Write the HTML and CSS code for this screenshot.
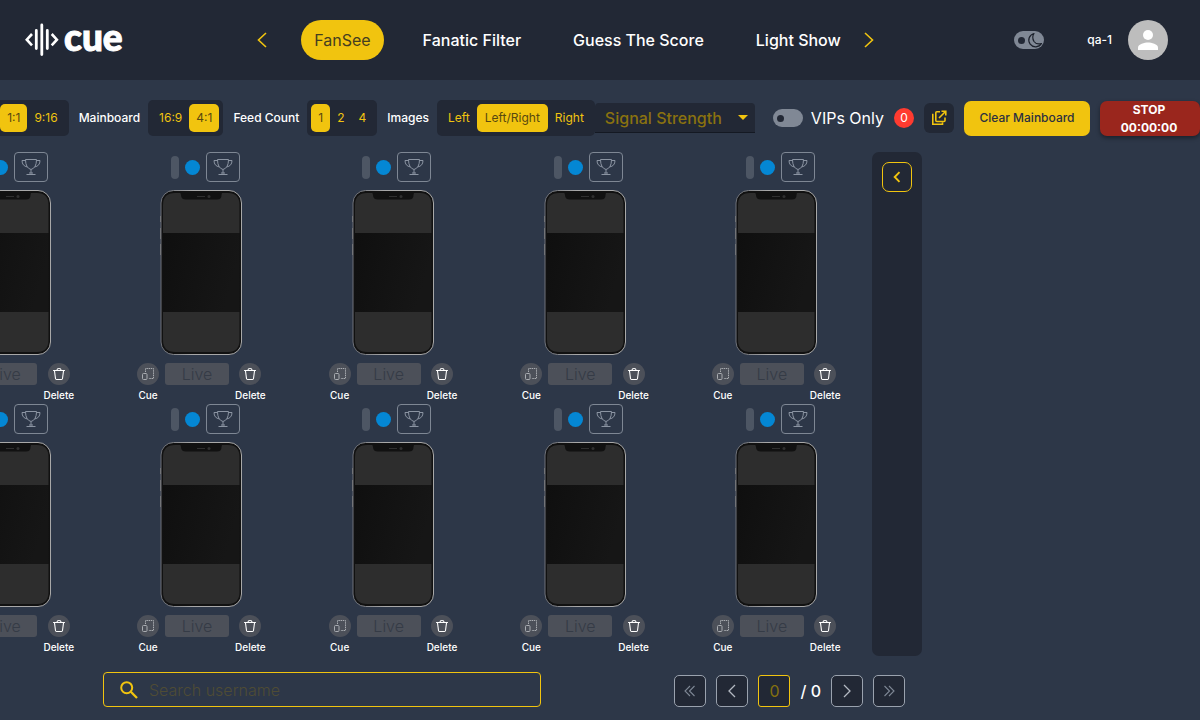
FILE: index.html
```html
<!DOCTYPE html>
<html lang="en">
<head>
<meta charset="utf-8">
<title>Cue - FanSee</title>
<link rel="stylesheet" href="styles.css">
</head>
<body>
<svg class="sprite" aria-hidden="true">
  <defs>
    <linearGradient id="screen" x1="0" y1="0" x2="1" y2="0.3">
      <stop offset="0" stop-color="#0f0f0f"/><stop offset="1" stop-color="#161616"/>
    </linearGradient>
    <linearGradient id="rim" x1="0" y1="0" x2="1" y2="0">
      <stop offset="0" stop-color="#6d7078"/><stop offset="0.4" stop-color="#a8a8a8"/><stop offset="1" stop-color="#a8a8a8"/>
    </linearGradient>
  </defs>
  <symbol id="phone" viewBox="0 0 82 165">
    <path d="M.5 26v6M.5 38v11M.5 54v11" stroke="#777" stroke-width="1"/>
    <path d="M81.5 42v19" stroke="#777" stroke-width="1"/>
    <rect x="1" y=".5" width="80.500" height="164" rx="12.500" fill="#111" stroke="url(#rim)"/>
    <path d="M3 43V15Q3 3 15 3H68Q79.500 3 79.500 15V43Z" fill="#2d2d2d"/>
    <rect x="3" y="43" width="76.500" height="79" fill="url(#screen)"/>
    <path d="M3 122H79.500V150Q79.500 162 68 162H15Q3 162 3 150Z" fill="#2d2d2d"/>
    <path d="M19 2H63Q61.500 3 61.500 5Q61.500 9.500 57 9.500H26Q21 9.500 21 5Q21 3 19 2Z" fill="#111"/>
    <path d="M37 6.500h8" stroke="#303030"/><circle cx="49" cy="6.500" r="1.500" fill="#303030"/>
  </symbol>
  <symbol id="trophy" viewBox="0 0 20 18">
    <path d="M4.500 1.500H15.500Q15.500 10 10 11.500Q4.500 10 4.500 1.500ZM4.500 2.500H1Q1 8 6.500 9M15.500 2.500H19Q19 8 13.500 9M10 11.500V15.500M8 15H12M5.500 16.500H14.500" fill="none" stroke="currentColor"/>
  </symbol>
  <symbol id="resize" viewBox="0 0 14 14">
    <path d="M4.500 5V1.500H12.500V11.500H7.500" fill="none" stroke="currentColor" stroke-dasharray="1.500 .7"/>
    <rect x="1.500" y="6.500" width="4.500" height="6" rx="1" fill="none" stroke="currentColor"/>
  </symbol>
  <symbol id="trash" viewBox="0 0 14 14">
    <path d="M1.500 3.500H12.500M5 3Q5 1.500 7 1.500Q9 1.500 9 3M2.500 4L3.500 11.500Q3.700 12.500 4.500 12.500H9.500Q10.300 12.500 10.500 11.500L11.500 4" fill="none" stroke="currentColor" stroke-width="1.100" stroke-linecap="round"/>
  </symbol>
</svg>

<header class="header">
  <a class="brand" href="#">
    <svg width="34" height="34" viewBox="0 0 34 34" fill="none" stroke="#fff" stroke-width="2.800" stroke-linecap="round" aria-hidden="true">
      <path d="M16.800 2V31.500M11.300 7.500V25.500M22.300 7.500V25.500"/>
      <path d="M7 11L1.800 16.700L7 22.400M26.700 11L31.900 16.700L26.700 22.400" stroke-width="2.600" stroke-linecap="butt"/>
    </svg>
    <span class="brand-name">cue</span>
  </a>
  <nav class="nav">
    <button class="nav-arrow" aria-label="Previous"><svg width="10" height="16" viewBox="0 0 10 16"><path d="M9 1L1.500 8L9 15"/></svg></button>
    <div class="nav-links">
      <a class="nav-link active" href="#">FanSee</a>
      <a class="nav-link" href="#">Fanatic Filter</a>
      <a class="nav-link" href="#">Guess The Score</a>
      <a class="nav-link" href="#">Light Show</a>
    </div>
    <button class="nav-arrow" aria-label="Next"><svg width="10" height="16" viewBox="0 0 10 16"><path d="M1 1L8.500 8L1 15"/></svg></button>
  </nav>
  <div class="account">
    <label class="switch"><input type="checkbox" aria-label="Dark mode">
      <svg class="moon" width="16" height="16" viewBox="0 0 16 16"><path d="M7 1.500A6.800 6.800 0 1 0 14.500 11.500Q9.500 13 7 9.500Q4.500 5 7 1.500Z" fill="none" stroke="#1b202b" stroke-width="1.200" stroke-linejoin="round"/></svg>
    </label>
    <span class="user">qa-1</span>
    <svg width="40" height="40" viewBox="0 0 40 40" aria-label="Profile"><circle cx="20" cy="20" r="20" fill="#bdbdbd"/><circle cx="20" cy="15" r="5" fill="#fff"/><path d="M10 30V27.500C10 24.200 16.700 22.500 20 22.500S30 24.200 30 27.500V30Z" fill="#fff"/></svg>
  </div>
</header>

<section class="toolbar">
  <div class="segment" role="group" aria-label="Feed ratio"><button class="on">1:1</button><button>9:16</button></div>
  <span class="caption">Mainboard</span>
  <div class="segment" role="group" aria-label="Mainboard"><button>16:9</button><button class="on">4:1</button></div>
  <span class="caption">Feed Count</span>
  <div class="segment" role="group" aria-label="Feed Count"><button class="on">1</button><button>2</button><button>4</button></div>
  <span class="caption">Images</span>
  <div class="segment" role="group" aria-label="Images"><button>Left</button><button class="on wide">Left/Right</button><button>Right</button></div>
  <div class="signal">
    <select aria-label="Signal Strength"><option>Signal Strength</option></select>
    <svg width="10" height="5" viewBox="0 0 10 5" aria-hidden="true"><path d="M0 0H10L5 5Z" fill="#f1c40f"/></svg>
  </div>
  <label class="vips"><span class="switch"><input type="checkbox"></span>VIPs Only</label>
  <span class="badge">0</span>
  <button class="popout" aria-label="Open in new window"><svg width="16" height="16" viewBox="0 0 16 16" fill="none" stroke="#f1c40f" stroke-width="1.600"><path d="M9 1.800H5.800Q4.800 1.800 4.800 2.800V10.500Q4.800 11.500 5.800 11.500H13Q14 11.500 14 10.500V7.500M2.500 4.500H1.800V14.200H11.500V12.500M8 8L14.500 1.500M10.500 1.200H14.800V5.500"/></svg></button>
  <button class="clear">Clear Mainboard</button>
  <button class="stop">STOP<br>00:00:00</button>
</section>

<main class="workspace">
  <div class="board">
    <div class="feeds">
      <article class="feed"><div class="status"><i class="level"></i><i class="dot"></i><button class="award" aria-label="Award"><svg><use href="#trophy"/></svg></button></div><svg class="phone"><use href="#phone"/></svg><div class="actions"><button class="act"><span class="round dim"><svg><use href="#resize"/></svg></span>Cue</button><button class="live" disabled>Live</button><button class="act"><span class="round"><svg><use href="#trash"/></svg></span>Delete</button></div></article>
      <article class="feed"><div class="status"><i class="level"></i><i class="dot"></i><button class="award" aria-label="Award"><svg><use href="#trophy"/></svg></button></div><svg class="phone"><use href="#phone"/></svg><div class="actions"><button class="act"><span class="round dim"><svg><use href="#resize"/></svg></span>Cue</button><button class="live" disabled>Live</button><button class="act"><span class="round"><svg><use href="#trash"/></svg></span>Delete</button></div></article>
      <article class="feed"><div class="status"><i class="level"></i><i class="dot"></i><button class="award" aria-label="Award"><svg><use href="#trophy"/></svg></button></div><svg class="phone"><use href="#phone"/></svg><div class="actions"><button class="act"><span class="round dim"><svg><use href="#resize"/></svg></span>Cue</button><button class="live" disabled>Live</button><button class="act"><span class="round"><svg><use href="#trash"/></svg></span>Delete</button></div></article>
      <article class="feed"><div class="status"><i class="level"></i><i class="dot"></i><button class="award" aria-label="Award"><svg><use href="#trophy"/></svg></button></div><svg class="phone"><use href="#phone"/></svg><div class="actions"><button class="act"><span class="round dim"><svg><use href="#resize"/></svg></span>Cue</button><button class="live" disabled>Live</button><button class="act"><span class="round"><svg><use href="#trash"/></svg></span>Delete</button></div></article>
      <article class="feed"><div class="status"><i class="level"></i><i class="dot"></i><button class="award" aria-label="Award"><svg><use href="#trophy"/></svg></button></div><svg class="phone"><use href="#phone"/></svg><div class="actions"><button class="act"><span class="round dim"><svg><use href="#resize"/></svg></span>Cue</button><button class="live" disabled>Live</button><button class="act"><span class="round"><svg><use href="#trash"/></svg></span>Delete</button></div></article>
      <article class="feed"><div class="status"><i class="level"></i><i class="dot"></i><button class="award" aria-label="Award"><svg><use href="#trophy"/></svg></button></div><svg class="phone"><use href="#phone"/></svg><div class="actions"><button class="act"><span class="round dim"><svg><use href="#resize"/></svg></span>Cue</button><button class="live" disabled>Live</button><button class="act"><span class="round"><svg><use href="#trash"/></svg></span>Delete</button></div></article>
      <article class="feed"><div class="status"><i class="level"></i><i class="dot"></i><button class="award" aria-label="Award"><svg><use href="#trophy"/></svg></button></div><svg class="phone"><use href="#phone"/></svg><div class="actions"><button class="act"><span class="round dim"><svg><use href="#resize"/></svg></span>Cue</button><button class="live" disabled>Live</button><button class="act"><span class="round"><svg><use href="#trash"/></svg></span>Delete</button></div></article>
      <article class="feed"><div class="status"><i class="level"></i><i class="dot"></i><button class="award" aria-label="Award"><svg><use href="#trophy"/></svg></button></div><svg class="phone"><use href="#phone"/></svg><div class="actions"><button class="act"><span class="round dim"><svg><use href="#resize"/></svg></span>Cue</button><button class="live" disabled>Live</button><button class="act"><span class="round"><svg><use href="#trash"/></svg></span>Delete</button></div></article>
      <article class="feed"><div class="status"><i class="level"></i><i class="dot"></i><button class="award" aria-label="Award"><svg><use href="#trophy"/></svg></button></div><svg class="phone"><use href="#phone"/></svg><div class="actions"><button class="act"><span class="round dim"><svg><use href="#resize"/></svg></span>Cue</button><button class="live" disabled>Live</button><button class="act"><span class="round"><svg><use href="#trash"/></svg></span>Delete</button></div></article>
      <article class="feed"><div class="status"><i class="level"></i><i class="dot"></i><button class="award" aria-label="Award"><svg><use href="#trophy"/></svg></button></div><svg class="phone"><use href="#phone"/></svg><div class="actions"><button class="act"><span class="round dim"><svg><use href="#resize"/></svg></span>Cue</button><button class="live" disabled>Live</button><button class="act"><span class="round"><svg><use href="#trash"/></svg></span>Delete</button></div></article>
    </div>
    <aside class="drawer"><button class="drawer-toggle" aria-label="Expand"><svg width="8" height="12" viewBox="0 0 8 12"><path d="M6.500 1.200L1.700 6L6.500 10.800" fill="none" stroke="#f1c40f" stroke-width="1.900"/></svg></button></aside>
  </div>
  <div class="footer">
    <label class="search">
      <svg width="18" height="18" viewBox="0 0 18 18" fill="none" stroke="#f1c40f" stroke-width="2" aria-hidden="true"><circle cx="6.700" cy="6.700" r="5.500"/><path d="M10.800 10.800L17 17" stroke-width="2.300"/></svg>
      <input type="text" placeholder="Search username" aria-label="Search username">
    </label>
    <div class="pager">
      <button class="soft" aria-label="First page"><svg width="12" height="12" viewBox="0 0 12 12"><path d="M6 1L1 6L6 11M10.500 1L5.500 6L10.500 11"/></svg></button>
      <button aria-label="Previous page"><svg width="12" height="14" viewBox="0 0 12 14"><path d="M9 1L3 7L9 13"/></svg></button>
      <input type="text" value="0" aria-label="Page">
      <span class="total">/ 0</span>
      <button aria-label="Next page"><svg width="12" height="14" viewBox="0 0 12 14"><path d="M3 1L9 7L3 13"/></svg></button>
      <button class="soft" aria-label="Last page"><svg width="12" height="12" viewBox="0 0 12 12"><path d="M1.500 1L6.500 6L1.500 11M6 1L11 6L6 11"/></svg></button>
    </div>
  </div>
</main>
</body>
</html>
```
FILE: styles.css
```css
:root {
  --bg: #2d3748;
  --panel: #222835;
  --gold: #f1c40f;
  --gray: #7e8794;
}
* { box-sizing: border-box; }
body {
  margin: 0;
  overflow: hidden;
  background: var(--bg);
  color: #fff;
  font: 12px/18px Inter, "Liberation Sans", sans-serif;
}
button, input, select {
  font: inherit;
  color: inherit;
  margin: 0;
  padding: 0;
  border: 0;
  background: none;
}
a { color: inherit; text-decoration: none; }
svg { display: block; flex: none; }
.sprite { width: 0; height: 0; position: absolute; }

.header {
  display: flex;
  align-items: center;
  justify-content: space-between;
  height: 80px;
  padding: 0 32px 0 25px;
  background: var(--panel);
}
.brand { display: flex; align-items: center; gap: 5px; }
.brand-name {
  padding-bottom: 6px;
  font: 900 37px/40px Lato, sans-serif;
  -webkit-text-stroke: 1px #fff;
}
.nav { display: flex; align-items: center; gap: 34px; padding-right: 6px; }
.nav-links { display: flex; gap: 26px; margin-right: -24px; }
.nav-link {
  padding: 0 13px;
  border-radius: 20px;
  font-size: 16px;
  font-weight: 500;
  line-height: 40px;
  white-space: nowrap;
}
.nav-link.active { background: var(--gold); color: #453e20; font-weight: 400; }
.nav-arrow svg { fill: none; stroke: var(--gold); stroke-width: 1.6; }
.account { display: flex; align-items: center; gap: 16px; }
.account .switch { margin-right: 27px; }
.user { font-weight: 500; }
.switch {
  display: flex;
  align-items: center;
  justify-content: space-between;
  width: 30px;
  height: 18px;
  padding: 0 1px 0 4px;
  border-radius: 9px;
  background: #808895;
}
.switch input {
  appearance: none;
  width: 7px;
  height: 7px;
  border-radius: 50%;
  background: var(--panel);
}

.toolbar {
  display: flex;
  align-items: center;
  justify-content: flex-end;
  padding: 20px 0 16px;
  white-space: nowrap;
}
.toolbar > * { flex: none; }
.segment {
  display: flex;
  padding: 4px;
  border-radius: 5px;
  background: var(--panel);
}
.segment button {
  height: 28px;
  padding: 0 7px;
  border-radius: 5px;
  color: var(--gold);
}
.segment .on { background: var(--gold); color: #57480f; }
.segment .wide { padding: 0 8px; }
.caption { margin: 0 8px 0 10px; font-weight: 500; }
.signal {
  display: flex;
  align-items: center;
  width: 160px;
  height: 30px;
  padding: 0 7px 0 10px;
  border-bottom: 1px solid #141923;
  border-radius: 4px 4px 0 0;
  background: var(--panel);
}
.signal select {
  appearance: none;
  flex: 1;
  color: #8a720f;
  font-size: 16px;
  font-weight: 500;
  line-height: 28px;
}
.vips {
  display: flex;
  align-items: center;
  gap: 8px;
  margin: 0 10px 0 18px;
  font-size: 16px;
}
.badge {
  width: 20px;
  margin-right: 10px;
  border-radius: 10px;
  background: #ff3b30;
  line-height: 20px;
  text-align: center;
}
.popout {
  display: flex;
  align-items: center;
  justify-content: center;
  width: 30px;
  height: 30px;
  margin-right: 10px;
  border-radius: 6px;
  background: var(--panel);
}
.clear {
  width: 126px;
  height: 35px;
  margin-right: 10px;
  border-radius: 7px;
  background: var(--gold);
  color: #2c3040;
  font-weight: 500;
}
.stop {
  width: 100px;
  height: 35px;
  padding: 0 2px 2px 0;
  border-radius: 7px;
  background: #9a261d;
  box-shadow: 0 2px 4px rgba(0, 0, 0, 0.4);
  font-weight: 700;
}

.workspace { margin-right: 278px; }
.board { display: flex; justify-content: flex-end; }
.feeds {
  display: grid;
  grid-template-columns: repeat(5, 1fr);
  flex: none;
  width: 958px;
}
.feed {
  display: flex;
  flex-direction: column;
  align-items: center;
  gap: 8px;
  height: 252px;
}
.status { display: flex; align-items: center; gap: 6px; padding-left: 8px; }
.level { width: 8px; height: 23px; border-radius: 4px; background: #4d5664; }
.dot { width: 15px; height: 15px; border-radius: 50%; background: #0487d4; }
.award {
  display: flex;
  align-items: center;
  justify-content: center;
  width: 34px;
  height: 30px;
  border: 1px solid var(--gray);
  border-radius: 4px;
  color: #8b94a2;
}
.award svg { width: 20px; height: 18px; }
.phone { width: 82px; height: 165px; }
.actions { display: flex; align-items: flex-start; gap: 6px; }
.act {
  display: flex;
  flex-direction: column;
  align-items: center;
  gap: 3px;
  font-size: 10px;
  font-weight: 500;
  line-height: 14px;
}
.round {
  display: flex;
  align-items: center;
  justify-content: center;
  width: 22px;
  height: 22px;
  border-radius: 50%;
  background: #4c5059;
}
.round.dim { color: #a9acb1; }
.round svg { width: 14px; height: 14px; }
.live {
  width: 64px;
  height: 22px;
  border-radius: 3px;
  background: #4c5059;
  color: #353b46;
  font-size: 16px;
  font-weight: 300;
}
.drawer {
  flex: none;
  width: 50px;
  padding: 10px;
  border-radius: 7px;
  background: var(--panel);
}
.drawer-toggle {
  display: flex;
  align-items: center;
  justify-content: center;
  width: 30px;
  height: 30px;
  border: 1px solid var(--gold);
  border-radius: 7px;
}

.footer {
  display: flex;
  align-items: flex-end;
  justify-content: space-between;
  padding: 16px 17px 13px 103px;
}
.search {
  display: flex;
  align-items: center;
  flex: 0 1 438px;
  gap: 11px;
  height: 35px;
  padding: 0 16px;
  border: 1px solid var(--gold);
  border-radius: 4px;
}
.search input { flex: 1; min-width: 0; font-size: 16px; font-weight: 300; outline: 0; }
.search input::placeholder { color: #4f4c35; opacity: 1; }
.pager { display: flex; align-items: center; gap: 10px; }
.pager button, .pager input {
  display: flex;
  align-items: center;
  justify-content: center;
  width: 32px;
  height: 32px;
  border: 1px solid #9aa2ae;
  border-radius: 5px;
  background: var(--panel);
}
.pager input {
  border-color: var(--gold);
  border-radius: 3px;
  color: #84700f;
  font-size: 16px;
  text-align: center;
}
.pager svg { fill: none; stroke: #b3b9c2; stroke-width: 1.3; }
.pager .soft svg { stroke: #7e8794; stroke-width: 1.1; }
.total { font-size: 16px; font-weight: 500; }
```
